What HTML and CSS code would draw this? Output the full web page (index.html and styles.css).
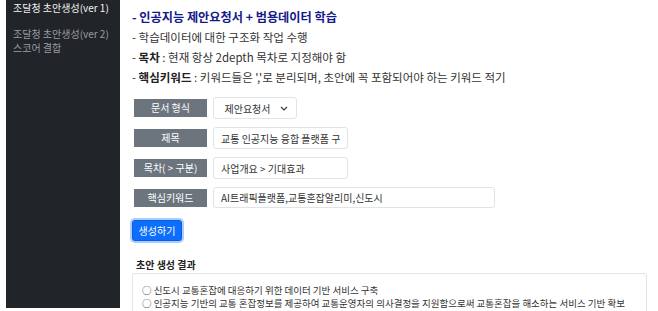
FILE: index.html
```html
<!DOCTYPE html>
<html>
	<head>
		<meta charset="utf-8">
		<link rel="stylesheet" href="styles.css">
	</head>
	<body>
		<nav class="sidebar">
			<a class="nav-item active" href="#v1">조달청 초안생성(ver 1)</a>
			<a class="nav-item" href="#v2">조달청 초안생성(ver 2)</a>
			<a class="nav-item" href="#score">스코어 결합</a>
		</nav>

		<main class="main">
			<ul class="notes">
				<li class="title">- 인공지능 제안요청서 + 범용데이터 학습</li>
				<li>- 학습데이터에 대한 구조화 작업 수행</li>
				<li>- <b>목차</b> : 현재 항상 2depth 목차로 지정해야 함</li>
				<li>- <b>핵심키워드</b> : 키워드들은 ','로 분리되며, 초안에 꼭 포함되어야 하는 키워드 적기</li>
			</ul>

			<form class="form">
				<div class="row">
					<span class="label">문서 형식</span>
					<div class="select">
						<span>제안요청서</span>
						<svg width="8" height="5" viewBox="0 0 8 5"><path d="M1 1l3 3 3-3" fill="none" stroke="#333" stroke-width="1.1"/></svg>
					</div>
				</div>
				<div class="row">
					<span class="label">제목</span>
					<input class="field mid" type="text" value="교통 인공지능 융합 플랫폼 구축">
				</div>
				<div class="row">
					<span class="label">목차( &gt; 구분)</span>
					<input class="field mid" type="text" value="사업개요 &gt; 기대효과">
				</div>
				<div class="row">
					<span class="label">핵심키워드</span>
					<input class="field wide" type="text" value="AI트래픽플랫폼,교통혼잡알리미,신도시">
				</div>
				<button class="btn" type="button">생성하기</button>
			</form>

			<h4 class="result-title">초안 생성 결과</h4>
			<div class="result">
				<p>○ 신도시 교통혼잡에 대응하기 위한 데이터 기반 서비스 구축</p>
				<p>○ 인공지능 기반의 교통 혼잡정보를 제공하여 교통운영자의 의사결정을 지원함으로써 교통혼잡을 해소하는 서비스 기반 확보</p>
			</div>
		</main>
	</body>
</html>
```

FILE: styles.css
```css
html, body {
	margin: 0;
	padding: 0;
	background: #fff;
	font-family: "Noto Sans CJK KR", "Noto Sans", sans-serif;
	color: #333;
	overflow: hidden;
}

body {
	display: flex;
	align-items: flex-start;
	height: 311px;
}

/* Sidebar */
.sidebar {
	margin-left: 6px;
	width: 114px;
	height: 308px;
	background: #212529;
	display: flex;
	flex-direction: column;
	padding: 1px 0 0 7px;
	box-sizing: border-box;
}
.nav-item {
	font-size: 10px;
	line-height: 14px;
	color: #9a9da1;
	text-decoration: none;
	white-space: nowrap;
}
.nav-item.active {
	color: #f2f2f2;
	margin-bottom: 12px;
}

/* Main */
.main {
	padding: 7px 0 0 12px;
	flex: 1;
}

.notes {
	list-style: none;
	margin: 0;
	padding: 0;
	font-size: 11.5px;
	line-height: 20px;
}
.notes .title {
	color: #141a8a;
	font-weight: bold;
	font-size: 12.2px;
}
.notes b { color: #222; }

.form {
	margin-top: 10px;
	display: flex;
	flex-direction: column;
	align-items: flex-start;
	gap: 8px;
}
.row {
	display: flex;
	align-items: center;
	gap: 6px;
	padding-left: 2px;
}
.label {
	width: 73px;
	height: 18px;
	line-height: 18px;
	background: #6c757d;
	color: #fff;
	font-size: 10px;
	text-align: center;
}
.select, .field {
	height: 22px;
	box-sizing: border-box;
	border: 1px solid #e1e3e6;
	border-radius: 3px;
	background: #fff;
	font-family: inherit;
	font-size: 10px;
	color: #333;
}
.select {
	width: 84px;
	display: flex;
	align-items: center;
	justify-content: center;
	gap: 9px;
	padding-left: 2px;
}
.field {
	padding: 0 7px;
	outline: none;
}
.field.mid { width: 135px; }
.field.wide { width: 282px; height: 21px; }

.btn {
	margin-top: 4px;
	width: 50px;
	height: 21px;
	padding: 0;
	border: 1px solid #0b5ed7;
	border-radius: 3px;
	background: #0d6efd;
	color: #fff;
	font-family: inherit;
	font-size: 10px;
	box-shadow: 0 0 0 2px rgba(13, 110, 253, 0.35);
}

.result-title {
	margin: 17px 0 0 4px;
	font-size: 10px;
	line-height: 13px;
	font-weight: bold;
	color: #222;
}
.result {
	margin-top: 2px;
	width: 515px;
	height: 38px;
	box-sizing: border-box;
	border: 1px solid #e3e5e8;
	border-bottom: 0;
	border-radius: 3px 3px 0 0;
	padding: 10px 0 0 9px;
}
.result p {
	margin: 0;
	font-size: 9.5px;
	line-height: 13px;
	white-space: nowrap;
}
```
